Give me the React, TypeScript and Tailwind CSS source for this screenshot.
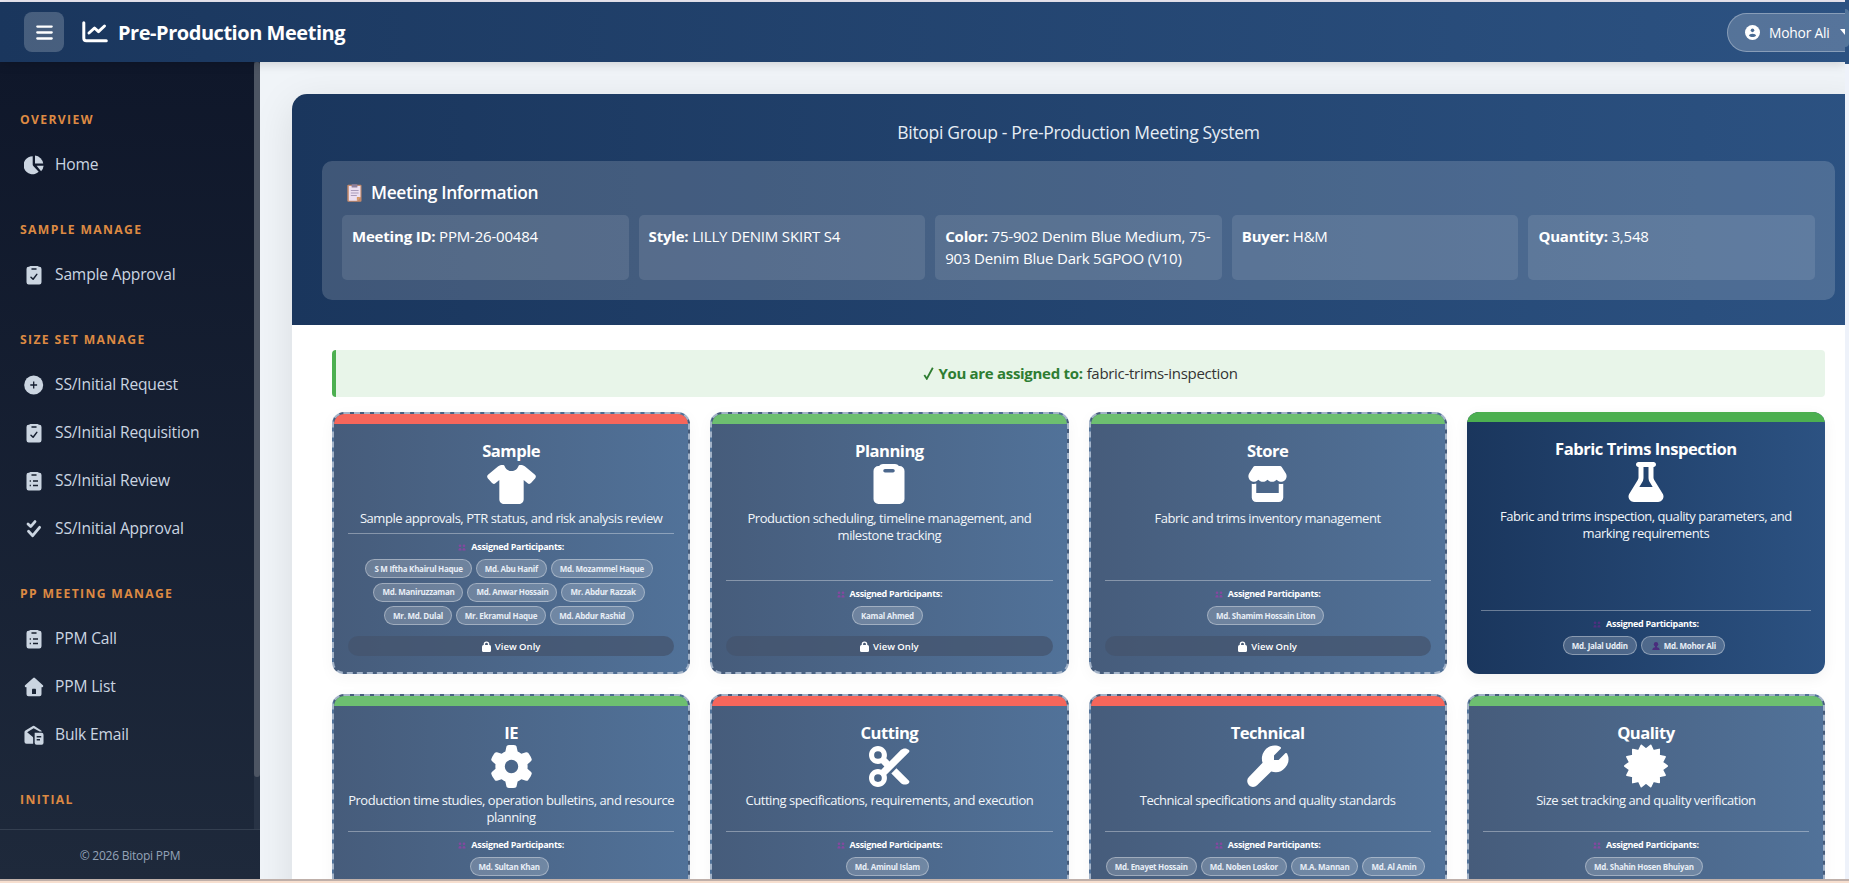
import React from "react";
import { FaBars, FaShirt, FaStore, FaFlask, FaGear, FaScissors } from "react-icons/fa6";

type IconProps = { className?: string };

const ChartIcon = ({ className }: IconProps) => (
  <svg viewBox="0 0 26 22" className={className} fill="none" stroke="currentColor" strokeLinecap="round" strokeLinejoin="round">
    <path d="M1.8 1.8v15.4c0 1.6.9 2.5 2.5 2.5h20" strokeWidth="3" />
    <path d="M7 12l5.5-5 4 3.6L22.5 5" strokeWidth="3" />
  </svg>
);

const PieIcon = ({ className }: IconProps) => (
  <svg viewBox="0 0 20 20" className={className} fill="currentColor">
    <path d="M8.7 1.2a9 9 0 1 0 6 15.6L9.3 11a2 2 0 0 1-.6-1.4z" />
    <path d="M11 .6v8h8.2A9 9 0 0 0 11 .6z" />
    <path d="M12.6 10.8h7a8.6 8.6 0 0 1-2.5 5.4z" />
  </svg>
);

const Board = "M6.5 1h7a1.6 1.6 0 0 1 1.3.7h.5A2.2 2.2 0 0 1 17.5 4v13.2a2.3 2.3 0 0 1-2.2 2.3H4.7a2.3 2.3 0 0 1-2.2-2.3V4a2.2 2.2 0 0 1 2.2-2.3h.5A1.6 1.6 0 0 1 6.5 1z";

const ClipCheckIcon = ({ className }: IconProps) => (
  <svg viewBox="0 0 20 20" className={className}>
    <path fill="currentColor" d={Board} />
    <path d="M8 4h4" stroke="#151e30" strokeWidth="1.5" strokeLinecap="round" />
    <path d="M7 12.200l2.100 2 3.700-4.800" stroke="#151e30" strokeWidth="1.5" fill="none" strokeLinecap="round" strokeLinejoin="round" />
  </svg>
);

const ClipListIcon = ({ className }: IconProps) => (
  <svg viewBox="0 0 20 20" className={className}>
    <path fill="currentColor" d={Board} />
    <path d="M8 4h4" stroke="#18212f" strokeWidth="1.5" strokeLinecap="round" />
    <path d="M5.700 10h1.200M9 10h5M5.700 14.500h1.200M9 14.500h5" stroke="#18212f" strokeWidth="1.5" />
  </svg>
);

const PlusIcon = ({ className }: IconProps) => (
  <svg viewBox="0 0 20 20" className={className}>
    <circle cx="9.7" cy="10" r="9.5" fill="currentColor" />
    <path d="M9.700 6.600v6.800M6.300 10h6.800" stroke="#151e30" strokeWidth="1.3" />
  </svg>
);

const DoubleCheckIcon = ({ className }: IconProps) => (
  <svg viewBox="0 0 20 20" className={className} fill="none" stroke="currentColor" strokeWidth="2.8" strokeLinecap="round" strokeLinejoin="round">
    <path d="M4 4.900l2.700 2.700L11 2.600" />
    <path d="M4.500 12.300l4.200 4.400 6.900-8.400" />
  </svg>
);

const HomeIcon = ({ className }: IconProps) => (
  <svg viewBox="0 0 20 20" className={className}>
    <path fill="currentColor" d="M9.200.9a1.300 1.300 0 0 1 1.700 0l8 7.400a1.100 1.100 0 0 1-.7 1.900h-.7v7.100a2 2 0 0 1-2 2h-11a2 2 0 0 1-2-2v-7.100h-.7a1.100 1.100 0 0 1-.7-1.900z" />
    <path fill="#1b2536" d="M8 17v-4.200c0-.7.400-1.100 1.100-1.100h1.800c.7 0 1.100.4 1.100 1.100V17z" />
  </svg>
);

const MailIcon = ({ className }: IconProps) => (
  <svg viewBox="0 0 21 20" className={className}>
    <path fill="currentColor" d="M9.300.6a1.600 1.600 0 0 1 1.600 0L18 5.200c.5.300.7.700.7 1.200h-2.300L10.100 3 3.300 7l5.400 4.600a2 2 0 0 1 .9 1.500v6H2.600A2.100 2.100 0 0 1 .5 17V7c0-.8.300-1.400 1-1.800z" />
    <path fill="currentColor" d="M11.200 7.700h7.300a2 2 0 0 1 2 2v8.500a2 2 0 0 1-2 2h-5.300a2 2 0 0 1-2-2z" />
    <path d="M13.300 11.800h4.800M13.300 15h3.500" stroke="#1b2536" strokeWidth="1.5" />
  </svg>
);

const ClipboardIcon = ({ className }: IconProps) => (
  <svg viewBox="0 0 40 40" className={className}>
    <path fill="currentColor" d="M14 0h12a5 5 0 0 1 4 2h.5a5 5 0 0 1 5 5v28a5 5 0 0 1-5 5h-21a5 5 0 0 1-5-5V7a5 5 0 0 1 5-5h.5a5 5 0 0 1 4-2z" />
    <path d="M16 6.800h8" stroke="#4c688d" strokeWidth="3.5" strokeLinecap="round" />
  </svg>
);

const WrenchIcon = ({ className }: IconProps) => (
  <svg viewBox="0 0 42 42" className={className} fill="currentColor">
    <path d="M27.500.500c2.100 0 4.100.5 5.900 1.400.8.400.9 1.200.3 1.800L27 10.400V15h4.600l6.700-6.700c.6-.6 1.400-.5 1.800.3A13 13 0 0 1 24.200 26.500L10.100 40.200a5.700 5.700 0 0 1-8.200-8.200L15.600 17.800A13 13 0 0 1 27.500.500z" />
  </svg>
);

const BadgeIcon = ({ className }: IconProps) => {
  const points = Array.from({ length: 28 }, (_, i) => {
    const angle = ((i + 0) * Math.PI) / 14;
    const radius = i % 2 ? 21.2 : 16.8;
    return `${(22 + radius * Math.sin(angle)).toFixed(2)},${(22 - radius * Math.cos(angle)).toFixed(2)}`;
  }).join(" ");
  return (
    <svg viewBox="0 0 44 44" className={className} fill="currentColor" stroke="currentColor" strokeWidth="1.6" strokeLinejoin="round">
      <polygon points={points} />
    </svg>
  );
};

const LockIcon = ({ className }: IconProps) => (
  <svg viewBox="0 0 9 11" className={className}>
    <path d="M2.400 5V3.200a2.100 2.100 0 0 1 4.200 0V5" fill="none" stroke="currentColor" strokeWidth="1.4" />
    <rect x="0" y="4" width="9" height="7" rx="1.5" fill="currentColor" />
  </svg>
);

const UserIcon = ({ className }: IconProps) => (
  <svg viewBox="0 0 16 16" className={className}>
    <circle cx="8" cy="8" r="8" fill="currentColor" />
    <circle cx="8" cy="5.7" r="1.9" fill="#4a6c94" />
    <path d="M4.200 11.500c.3-1.600 1.500-2.300 3.800-2.300s3.500.7 3.800 2.300c-1 .9-2.300 1.300-3.800 1.300s-2.800-.4-3.800-1.300z" fill="#4a6c94" />
  </svg>
);

const NotesIcon = ({ className }: IconProps) => (
  <svg viewBox="0 0 15 18" className={className}>
    <rect x=".3" y=".8" width="14.2" height="17" rx="1" fill="#c58a6b" />
    <path d="M1.800 2h11.600v11l-3.500 3.800H1.800z" fill="#ecdff0" />
    <path d="M9.900 16.800V13h3.500z" fill="#d99a5f" />
    <rect x="4.6" y=".3" width="5.8" height="3.3" rx=".6" fill="#8d7f9b" />
    <path d="M3.800 6.500h7.800M3.800 9h7.800M3.800 11.500h6" stroke="#a99bb9" strokeWidth="1" />
  </svg>
);

const PeopleIcon = ({ className }: IconProps) => (
  <svg viewBox="0 0 8 7" className={className} fill="currentColor">
    <circle cx="2" cy="1.8" r="1.3" />
    <circle cx="6" cy="1.8" r="1.3" />
    <path d="M.4 6.500c0-3.200 3.200-3.200 3.200 0zM4.400 6.500c0-3.200 3.200-3.200 3.200 0z" />
  </svg>
);

const PersonIcon = ({ className }: IconProps) => (
  <svg viewBox="0 0 8 8" className={className} fill="#4a2d7d">
    <circle cx="4" cy="2.3" r="2.2" />
    <path d="M.3 8c0-1.800 1.200-2.600 2.700-2.800V4h2v1.200c1.500.2 2.700 1 2.700 2.800z" />
  </svg>
);

const NAV = [
  { title: "Overview", items: [{ label: "Home", Icon: PieIcon }] },
  { title: "Sample Manage", items: [{ label: "Sample Approval", Icon: ClipCheckIcon }] },
  {
    title: "Size Set Manage",
    items: [
      { label: "SS/Initial Request", Icon: PlusIcon },
      { label: "SS/Initial Requisition", Icon: ClipCheckIcon },
      { label: "SS/Initial Review", Icon: ClipListIcon },
      { label: "SS/Initial Approval", Icon: DoubleCheckIcon },
    ],
  },
  {
    title: "PP Meeting Manage",
    items: [
      { label: "PPM Call", Icon: ClipListIcon },
      { label: "PPM List", Icon: HomeIcon },
      { label: "Bulk Email", Icon: MailIcon },
    ],
  },
  { title: "Initial", items: [] },
];

const INFO = [
  ["Meeting ID:", "PPM-26-00484"],
  ["Style:", "LILLY DENIM SKIRT S4"],
  ["Color:", "75-902 Denim Blue Medium, 75-903 Denim Blue Dark 5GPOO (V10)"],
  ["Buyer:", "H&M"],
  ["Quantity:", "3,548"],
];

type Dept = {
  name: string;
  desc: string;
  icon: React.ReactNode;
  done: boolean;
  rows: string[][];
  active?: boolean;
};

const DEPTS: Dept[] = [
  {
    name: "Sample",
    desc: "Sample approvals, PTR status, and risk analysis review",
    icon: <FaShirt className="h-[39px] w-[49px]" />,
    done: false,
    rows: [
      ["S M Iftha Khairul Haque", "Md. Abu Hanif", "Md. Mozammel Haque"],
      ["Md. Maniruzzaman", "Md. Anwar Hossain", "Mr. Abdur Razzak"],
      ["Mr. Md. Dulal", "Mr. Ekramul Haque", "Md. Abdur Rashid"],
    ],
  },
  {
    name: "Planning",
    desc: "Production scheduling, timeline management, and milestone tracking",
    icon: <ClipboardIcon className="size-10" />,
    done: true,
    rows: [["Kamal Ahmed"]],
  },
  {
    name: "Store",
    desc: "Fabric and trims inventory management",
    icon: <FaStore className="h-[36px] w-[41px]" />,
    done: true,
    rows: [["Md. Shamim Hossain Liton"]],
  },
  {
    name: "Fabric Trims Inspection",
    desc: "Fabric and trims inspection, quality parameters, and marking requirements",
    icon: <FaFlask className="size-10" />,
    done: true,
    rows: [["Md. Jalal Uddin", "Md. Mohor Ali"]],
    active: true,
  },
  {
    name: "IE",
    desc: "Production time studies, operation bulletins, and resource planning",
    icon: <FaGear className="size-[43px]" />,
    done: true,
    rows: [["Md. Sultan Khan"]],
  },
  {
    name: "Cutting",
    desc: "Cutting specifications, requirements, and execution",
    icon: <FaScissors className="size-[41px]" />,
    done: false,
    rows: [["Md. Aminul Islam"]],
  },
  {
    name: "Technical",
    desc: "Technical specifications and quality standards",
    icon: <WrenchIcon className="size-[42px]" />,
    done: false,
    rows: [["Md. Enayet Hossain", "Md. Noben Loskor", "M.A. Mannan", "Md. Al Amin"]],
  },
  {
    name: "Quality",
    desc: "Size set tracking and quality verification",
    icon: <BadgeIcon className="size-[44px]" />,
    done: true,
    rows: [["Md. Shahin Hosen Bhuiyan"]],
  },
];

function DeptCard({ dept }: { dept: Dept }) {
  const { active, done } = dept;
  return (
    <div
      className={
        active
          ? "flex flex-col overflow-hidden rounded-[12px] bg-linear-to-r from-[#1a365d] to-[#2c5282] text-white shadow-[0_4px_15px_rgba(0,0,0,0.06)]"
          : "flex flex-col overflow-hidden rounded-[12px] border-2 border-dashed border-[#a3b3c8] bg-linear-to-r from-[#465c7b] to-[#517299] text-white shadow-[0_4px_15px_rgba(0,0,0,0.04)]"
      }
    >
      <div
        className={
          active ? "h-[10px] shrink-0 bg-[#4caf50]" : done ? "h-[10px] shrink-0 bg-[#6dbf70]" : "h-[10px] shrink-0 bg-[#f6665b]"
        }
      />
      <div className="flex grow flex-col items-center px-[14px] pt-[14px]">
        <h3 className="text-[16.6px] leading-[26px] font-bold tracking-[-0.03em]">{dept.name}</h3>
        <div className="flex h-[40px] items-center justify-center">{dept.icon}</div>
        <p className="mt-[6px] self-stretch text-center text-[13px] leading-[17px] tracking-[-0.035em] text-[#f2f6fa]">{dept.desc}</p>
        <div className="mt-auto flex w-full flex-col items-center border-t border-white/35">
          <div className="mt-[6px] flex h-[14px] items-center gap-[5px] text-[9px] font-bold tracking-[-0.035em]">
            <PeopleIcon className={active ? "h-[7px] w-[8px] text-[#4f2f80]" : "h-[7px] w-[8px] text-[#84489f]"} />
            Assigned Participants:
          </div>
          <div className="mt-[5px] flex flex-col gap-[4.5px] pr-[4px]">
            {dept.rows.map((row) => (
              <div key={row[0]} className="flex justify-center gap-[4px]">
                {row.map((name) => (
                  <span
                    key={name}
                    className="flex h-[19px] items-center gap-[4px] rounded-full border border-white/35 bg-white/20 px-[8px] text-[8px] font-bold tracking-[-0.035em] whitespace-nowrap text-[#e8eef6]"
                  >
                    {active && name === "Md. Mohor Ali" && <PersonIcon className="ml-[2px] size-[8px]" />}
                    {name}
                  </span>
                ))}
              </div>
            ))}
          </div>
        </div>
        {active ? (
          <div className="h-[19px] shrink-0" />
        ) : (
          <div className="mt-[11px] mb-[16px] flex h-[20px] w-full shrink-0 items-center justify-center gap-[4px] rounded-full bg-[#44546d]/75 pt-px text-[9.5px] font-semibold">
            <LockIcon className="h-[11px] w-[9px]" />
            <span className="pt-px">View Only</span>
          </div>
        )}
      </div>
    </div>
  );
}

export default function App() {
  return (
    <div className="flex h-[883px] w-[1849px] flex-col overflow-hidden bg-[#f7dfcf] font-['Open_Sans','Noto_Sans',sans-serif]">
      <div className="flex h-[879px] shrink-0">
        <div className="flex w-[1845px] shrink-0 flex-col overflow-hidden">
          <div className="h-[2px] shrink-0 bg-[#ece9f3]" />
          <header className="z-10 flex h-[60px] shrink-0 items-center bg-linear-to-r from-[#1a365d] to-[#2c5282] pl-6 text-white shadow-[0_2px_10px_rgba(0,0,0,0.15)]">
            <button className="flex size-10 items-center justify-center rounded-lg bg-white/20">
              <FaBars className="size-[19px]" />
            </button>
            <ChartIcon className="ml-[18px] h-[22px] w-[26px]" />
            <h1 className="ml-[10px] pt-[2px] text-[20px] leading-6 font-bold tracking-[-0.023em] whitespace-nowrap">Pre-Production Meeting</h1>
            <div className="mr-[-20px] ml-auto flex h-[39px] w-[138px] shrink-0 items-center rounded-full border border-white/30 bg-white/20 pl-[17px] text-[13.8px] font-medium tracking-[-0.015em] whitespace-nowrap">
              <UserIcon className="mr-[9px] size-[15px]" />
              <span className="w-[63px] shrink-0 pt-[2px]">Mohor Ali</span>
              <svg viewBox="0 0 10 6" className="ml-[8px] h-[6px] w-[10px] shrink-0" fill="currentColor">
                <path d="M0 0h10L5 6z" />
              </svg>
            </div>
          </header>
          <div className="flex min-h-0 grow">
            <aside className="flex w-[260px] shrink-0 flex-col bg-linear-to-b from-[#0f172a] to-[#1e293b]">
              <div className="flex min-h-0 grow overflow-hidden">
                <nav className="min-w-0 grow pt-[48px]">
                  {NAV.map(({ title, items }) => (
                    <section key={title} className="mb-[31px]">
                      <h2 className="mb-[11px] h-[20px] pl-5 text-[12.2px] leading-[20px] font-bold tracking-[0.11em] text-[#dd8a43] uppercase">{title}</h2>
                      {items.map(({ label, Icon }) => (
                        <div key={label} className="flex h-12 items-center pl-[23.5px] text-[15.6px] tracking-[-0.011em] text-[#cbd5e1]">
                          <Icon className="mr-[11.5px] size-5 shrink-0" />
                          {label}
                        </div>
                      ))}
                    </section>
                  ))}
                </nav>
                <div className="w-[6px] shrink-0 bg-[#283345]">
                  <div className="h-[715px] rounded-full bg-[#4d5563]" />
                </div>
              </div>
              <footer className="flex h-[50px] shrink-0 items-center justify-center border-t border-[#343f50] pt-[3px] text-[12px] tracking-[-0.02em] text-[#94a3b8]">© 2026 Bitopi PPM</footer>
            </aside>
            <main className="min-w-0 grow overflow-hidden bg-[#f0f4f8] pt-8 pl-8">
              <div className="h-[900px] w-[1573px] overflow-hidden rounded-[15px] bg-white shadow-[0_10px_40px_rgba(0,0,0,0.1)]">
                <div className="h-[231px] bg-linear-to-r from-[#1a365d] to-[#2c5282] px-[30px] pt-[25px] text-white">
                  <p className="h-[42px] text-center text-[17.5px] leading-[26px] tracking-[-0.018em] text-[#e6edf5]">Bitopi Group - Pre-Production Meeting System</p>
                  <div className="h-[139px] rounded-[10px] bg-white/[0.165] px-5 pt-[17px]">
                    <h2 className="flex h-[37px] items-start gap-[9px] pl-[5px] text-[17.4px] leading-[28px] font-semibold tracking-[-0.02em]">
                      <NotesIcon className="mt-[6px] h-[18px] w-[15px]" />
                      Meeting Information
                    </h2>
                    <div className="grid h-[65px] grid-cols-5 gap-[10px]">
                      {INFO.map(([label, value]) => (
                        <div key={label} className="rounded-[5px] bg-white/10 px-[10px] pt-[10px] text-[15px] leading-[22px] tracking-[-0.013em]">
                          <b>{label}</b> {value}
                        </div>
                      ))}
                    </div>
                  </div>
                </div>
                <div className="px-10 pt-[25px]">
                  <div className="flex h-[47px] items-center justify-center gap-[4px] rounded-[4px] border-l-4 border-[#4caf50] bg-[#e8f5e9] text-[15px] tracking-[-0.02em] text-[#333]">
                    <svg viewBox="0 0 10 13" className="h-[13px] w-[11px]" fill="none" stroke="#2e7d32" strokeWidth="1.8">
                      <path d="M.8 8l2.500 3.800L9.300.8" />
                    </svg>
                    <b className="text-[#2e7d32]">You are assigned to:</b>
                    <span>fabric-trims-inspection</span>
                  </div>
                  <div className="mt-[15px] grid grid-cols-4 grid-rows-[262px_231px] gap-5">
                    {DEPTS.map((dept) => (
                      <DeptCard key={dept.name} dept={dept} />
                    ))}
                  </div>
                </div>
              </div>
            </main>
          </div>
        </div>
        <div className="flex w-[4px] flex-col bg-[#eef2fa]">
          <div className="h-[64px] bg-[#2c5282] pt-[9px]">
            <div className="h-[38px] rounded-r-[4px] bg-[#54769c]" />
          </div>
        </div>
      </div>
      <div className="h-[2px] shrink-0 bg-[#bfb0aa]" />
    </div>
  );
}
